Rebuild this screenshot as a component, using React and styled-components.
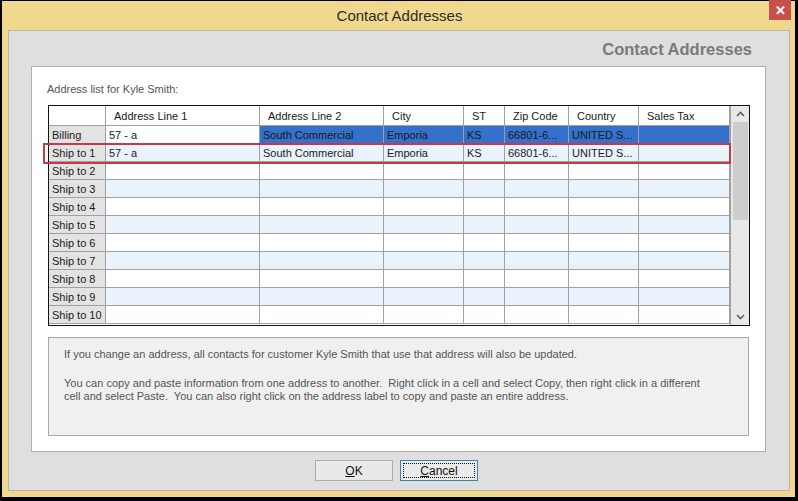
import React from 'react';
import styled, { createGlobalStyle } from 'styled-components';

const GlobalStyle = createGlobalStyle`
  html, body {
    margin: 0;
    padding: 0;
    background: #000;
    width: 798px;
    height: 501px;
    overflow: hidden;
  }
  * { box-sizing: border-box; }
`;

const Window = styled.div`
  margin: 1px 0 0 2px;
  width: 793px;
  height: 496px;
  background: #f0d98e;
  display: flex;
  flex-direction: column;
  font-family: 'Liberation Sans', Arial, sans-serif;
`;

const TitleBar = styled.div`
  position: relative;
  height: 29px;
  display: flex;
  align-items: center;
  justify-content: center;
  font-size: 15px;
  color: #2b2b2b;
  padding: 0 0 1px 2px;
`;

const CloseButton = styled.div`
  position: absolute;
  top: -1px;
  right: 4px;
  width: 22px;
  height: 20px;
  background: #c7504b;
  color: #fff;
  display: flex;
  align-items: center;
  justify-content: center;
  font-size: 13px;
  font-weight: bold;
`;

const Body = styled.div`
  margin: 0 5px 6px 6px;
  flex: 1;
  background: #dfdfdf;
  border: 1px solid #bcb79e;
  display: flex;
  flex-direction: column;
`;

const Heading = styled.div`
  height: 35px;
  display: flex;
  align-items: center;
  justify-content: flex-end;
  padding: 2px 37px 0 0;
  font-size: 16.5px;
  font-weight: bold;
  color: #7a7a7a;
`;

const Panel = styled.div`
  margin: 0 23px 0 22px;
  background: #fff;
  border: 1px solid #b3b1a0;
  height: 386px;
  padding: 12px 15px 0 15px;
  display: flex;
  flex-direction: column;
`;

const ListLabel = styled.div`
  font-size: 11px;
  color: #555;
  height: 26px;
  line-height: 14px;
  padding-top: 3px;
`;

const GridWrap = styled.div`
  position: relative;
  margin-left: 1px;
  width: 702px;
  height: 221px;
  border: 1px solid #111;
  display: flex;
  background: #fff;
`;

const GridBody = styled.div`
  width: 681px;
  display: flex;
  flex-direction: column;
  font-size: 11px;
  color: #1a1a1a;
`;

const Row = styled.div`
  display: flex;
  height: ${p => (p.$header ? 20 : 18)}px;
`;

const Cell = styled.div`
  width: ${p => p.$w}px;
  flex: none;
  border-right: 1px solid #a0a0a0;
  border-bottom: 1px solid #a0a0a0;
  padding: 1px 0 0 ${p => (p.$pad != null ? p.$pad : 3)}px;
  display: flex;
  align-items: center;
  white-space: nowrap;
  overflow: hidden;
  background: ${p => p.$bg};
`;

const Scrollbar = styled.div`
  width: 19px;
  border-left: 1px solid #a0a0a0;
  background: #e8e8e8;
  display: flex;
  flex-direction: column;
  align-items: center;
  padding-left: 1px;
`;

const ScrollArrow = styled.div`
  height: 16px;
  width: 100%;
  display: flex;
  align-items: center;
  justify-content: center;
`;

const Thumb = styled.div`
  width: 15px;
  height: 98px;
  background: #cdcdcd;
`;

const Track = styled.div`
  flex: 1;
`;

const Highlight = styled.div`
  position: absolute;
  left: -6px;
  top: 37px;
  width: 688px;
  height: 21px;
  border: 2px solid #c23b45;
  pointer-events: none;
`;

const InfoBox = styled.div`
  margin: 11px 0 0 1px;
  width: 701px;
  height: 99px;
  background: #f0f0f0;
  border: 1px solid #aaa99a;
  padding: 10px 15px;
  font-size: 11px;
  line-height: 13px;
  color: #555;
`;

const Para = styled.p`
  margin: 0 0 16px 0;
`;

const Footer = styled.div`
  flex: 1;
  display: flex;
  justify-content: center;
  align-items: center;
  gap: 7px;
  padding: 0 5px 1px 0;
`;

const Button = styled.div`
  width: 78px;
  height: 21px;
  background: ${p => (p.$focused ? '#ebebeb' : '#e9e9e9')};
  border: 1px solid ${p => (p.$focused ? '#3c7fb1' : '#adadad')};
  display: flex;
  align-items: center;
  justify-content: center;
  font-size: 12px;
  color: #111;
  padding: 2px;
`;

const FocusRing = styled.div`
  flex: 1;
  align-self: stretch;
  border: 1px dotted #111;
  display: flex;
  align-items: center;
  justify-content: center;
`;

const cols = [
  { key: 'label', title: '', w: 57 },
  { key: 'a1', title: 'Address Line 1', w: 154 },
  { key: 'a2', title: 'Address Line 2', w: 124 },
  { key: 'city', title: 'City', w: 80 },
  { key: 'st', title: 'ST', w: 41 },
  { key: 'zip', title: 'Zip Code', w: 64 },
  { key: 'country', title: 'Country', w: 70 },
  { key: 'tax', title: 'Sales Tax', w: 91 },
];

const filled = { a1: '57 - a', a2: 'South Commercial', city: 'Emporia', st: 'KS', zip: '66801-6...', country: 'UNITED S...', tax: '' };

const rows = [
  { label: 'Billing', ...filled, selected: true },
  { label: 'Ship to 1', ...filled },
  ...Array.from({ length: 9 }, (_, i) => ({ label: `Ship to ${i + 2}` })),
];

const Chevron = ({ up }) => (
  <svg width="9" height="6" viewBox="0 0 9 6">
    <path d={up ? 'M1 5 L4.5 1.5 L8 5' : 'M1 1 L4.5 4.5 L8 1'} fill="none" stroke="#606060" strokeWidth="1.6" />
  </svg>
);

const cellBg = (row, i, c) => {
  if (c.key === 'label') return '#e3e3e3';
  if (row.selected) return c.key === 'a1' ? '#fff' : '#3570cb';
  return i % 2 === 1 ? '#eaf2fb' : '#fff';
};

const App = () => (
  <>
    <GlobalStyle />
    <Window>
      <TitleBar>
        Contact Addresses
        <CloseButton>✕</CloseButton>
      </TitleBar>
      <Body>
        <Heading>Contact Addresses</Heading>
        <Panel>
          <ListLabel>Address list for Kyle Smith:</ListLabel>
          <GridWrap>
            <GridBody>
              <Row $header>
                {cols.map(c => (
                  <Cell key={c.key} $w={c.w} $bg="#fff" $pad={c.key === 'label' ? 3 : 8}>{c.title}</Cell>
                ))}
              </Row>
              {rows.map((row, i) => (
                <Row key={row.label}>
                  {cols.map(c => (
                    <Cell key={c.key} $w={c.w} $bg={cellBg(row, i, c)}>
                      {row[c.key] || ''}
                    </Cell>
                  ))}
                </Row>
              ))}
            </GridBody>
            <Scrollbar>
              <ScrollArrow><Chevron up /></ScrollArrow>
              <Thumb />
              <Track />
              <ScrollArrow><Chevron /></ScrollArrow>
            </Scrollbar>
            <Highlight />
          </GridWrap>
          <InfoBox>
            <Para>If you change an address, all contacts for customer Kyle Smith that use that address will also be updated.</Para>
            <Para>
              You can copy and paste information from one address to another.&nbsp; Right click in a cell and select Copy, then right click in a different
              <br />
              cell and select Paste.&nbsp; You can also right click on the address label to copy and paste an entire address.
            </Para>
          </InfoBox>
        </Panel>
        <Footer>
          <Button><span><u>O</u>K</span></Button>
          <Button $focused>
            <FocusRing><span><u>C</u>ancel</span></FocusRing>
          </Button>
        </Footer>
      </Body>
    </Window>
  </>
);

export default App;
